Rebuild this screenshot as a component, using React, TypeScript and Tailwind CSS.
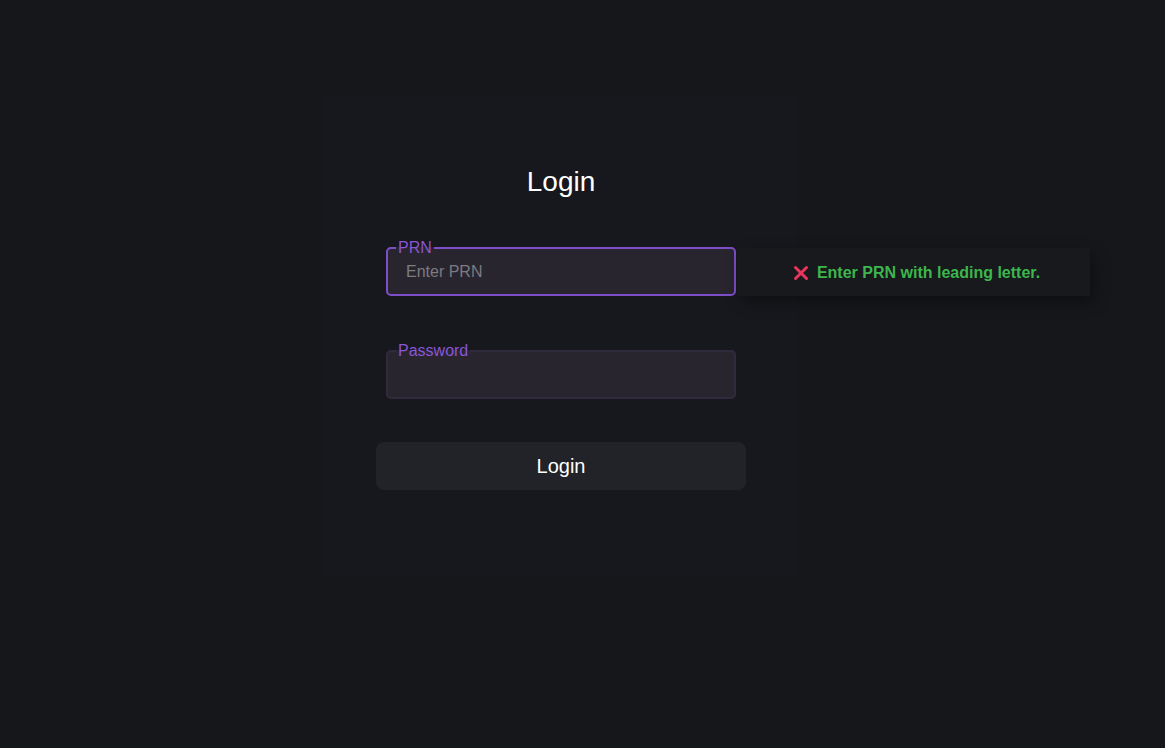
export default function App() {
  return (
    <div className="relative min-h-screen w-full bg-[#15171b] font-['Liberation_Sans',Arial,sans-serif]">
      <div className="pt-[96px] pl-[324px]">
        {/* Card */}
        <div className="flex h-[480px] w-[474px] flex-col items-center bg-[#16181d]">
          <h1 className="mt-[70px] text-[28px] leading-[32px] text-white">Login</h1>

          <fieldset className="mt-[42px] w-[350px] rounded-[5px] border-2 border-[#7d4ec8] bg-[#29252f] px-0 pb-[6px]">
            <legend className="ml-[8px] px-[2px] text-base leading-4 text-[#8a55d6]">PRN</legend>
            <input
              placeholder="Enter PRN"
              className="h-[32px] w-full bg-transparent pl-[18px] text-base text-white outline-none placeholder:text-[#7b7b80]"
            />
          </fieldset>

          <fieldset className="mt-[47px] w-[350px] rounded-[5px] border-2 border-[#2f2a3c] bg-[#29252f] px-0 pb-[6px]">
            <legend className="ml-[8px] px-[2px] text-base leading-4 text-[#8a55d6]">Password</legend>
            <input
              type="password"
              className="h-[32px] w-full bg-transparent pl-[18px] text-base text-white outline-none"
            />
          </fieldset>

          <button className="mt-[43px] h-[48px] w-[370px] rounded-lg bg-[#212328] text-[20px] text-white">
            Login
          </button>
        </div>
      </div>

      {/* Toast */}
      <div className="absolute left-[737px] top-[248px] flex h-[48px] w-[353px] items-center justify-center gap-[8px] bg-[#17191d] pl-[6px] pt-[2px] shadow-[4px_6px_14px_rgba(0,0,0,0.35)]">
        <svg width="16" height="16" viewBox="0 0 16 16" fill="none">
          <path d="M2.5 2.5 L13.5 13.5 M13.5 2.5 L2.5 13.5" stroke="#e8365d" strokeWidth="3" strokeLinecap="round" />
        </svg>
        <span className="text-[16px] font-bold text-[#3db64c]">Enter PRN with leading letter.</span>
      </div>
    </div>
  );
}
